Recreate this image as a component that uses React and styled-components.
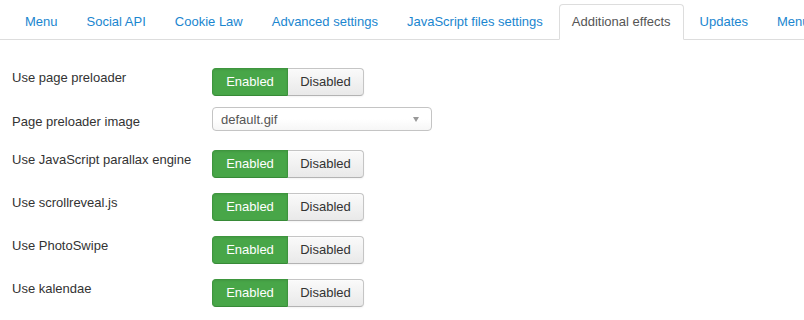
import React from 'react';
import styled, { createGlobalStyle } from 'styled-components';

const tabs = [
  'Menu',
  'Social API',
  'Cookie Law',
  'Advanced settings',
  'JavaScript files settings',
  'Additional effects',
  'Updates',
  'Menu assignment',
];

const options = [
  { label: 'Use page preloader', type: 'toggle' },
  { label: 'Page preloader image', type: 'select', value: 'default.gif' },
  { label: 'Use JavaScript parallax engine', type: 'toggle' },
  { label: 'Use scrollreveal.js', type: 'toggle' },
  { label: 'Use PhotoSwipe', type: 'toggle' },
  { label: 'Use kalendae', type: 'toggle' },
];

const GlobalStyle = createGlobalStyle`
  html, body {
    margin: 0;
    padding: 0;
    background: #fff;
  }
  body {
    font-family: "Liberation Sans", Arial, sans-serif;
    font-size: 13px;
    color: #333;
  }
`;

const Page = styled.div`
  width: 804px;
  height: 320px;
  padding-top: 4px;
  box-sizing: border-box;
  overflow: hidden;
`;

const TabBar = styled.ul`
  display: flex;
  margin: 0;
  padding: 0 0 0 12px;
  list-style: none;
  border-bottom: 1px solid #ddd;
  white-space: nowrap;
`;

const Tab = styled.li`
  flex-shrink: 0;
  margin: 0 3px -1px 0;
  padding: 8px 12px;
  line-height: 18px;
  border: 1px solid ${p => (p.$active ? '#ddd' : 'transparent')};
  border-bottom-color: ${p => (p.$active ? '#fff' : 'transparent')};
  border-radius: 4px 4px 0 0;
  background: ${p => (p.$active ? '#fff' : 'transparent')};
  color: ${p => (p.$active ? '#555' : '#1a86cf')};
  cursor: pointer;
`;

const Form = styled.div`
  margin-top: 28px;
  padding-left: 12px;
`;

const Row = styled.div`
  display: flex;
  align-items: flex-start;
  margin-bottom: 15px;
`;

const Label = styled.div`
  width: 200px;
  flex-shrink: 0;
  padding-top: ${p => p.$offset || 1}px;
  line-height: 18px;
  color: #333;
`;

const ButtonGroup = styled.div`
  display: flex;
`;

const ToggleButton = styled.button`
  width: 76px;
  height: 28px;
  box-sizing: border-box;
  padding: 0;
  font-family: inherit;
  font-size: 13px;
  line-height: 18px;
  border: 1px solid ${p => (p.$on ? '#3e963e' : '#c5c5c5')};
  border-bottom-color: ${p => (p.$on ? '#378a37' : '#b3b3b3')};
  background: ${p => (p.$on ? '#48a648' : 'linear-gradient(#fafafa, #e9e9e9)')};
  color: ${p => (p.$on ? '#fff' : '#333')};
  box-shadow: ${p => (p.$on ? 'inset 0 1px 2px rgba(0,0,0,0.08)' : 'inset 0 1px 0 rgba(255,255,255,0.4), 0 1px 2px rgba(0,0,0,0.05)')};
  cursor: pointer;

  &:first-child {
    border-radius: 4px 0 0 4px;
  }
  &:last-child {
    border-radius: 0 4px 4px 0;
    border-left: none;
  }
`;

const Select = styled.div`
  display: flex;
  align-items: center;
  justify-content: space-between;
  width: 220px;
  height: 24px;
  box-sizing: border-box;
  margin: -4px 0 4px;
  padding: 0 12px 0 8px;
  border: 1px solid #c4c4c4;
  border-radius: 4px;
  background: linear-gradient(#fff 50%, #f6f6f6);
  color: #555;
  font-size: 13px;
  cursor: pointer;
`;

const Caret = styled.span`
  width: 0;
  height: 0;
  border-left: 3px solid transparent;
  border-right: 3px solid transparent;
  border-top: 5px solid #999;
`;

const Toggle = () => (
  <ButtonGroup>
    <ToggleButton $on>Enabled</ToggleButton>
    <ToggleButton>Disabled</ToggleButton>
  </ButtonGroup>
);

const App = () => (
  <Page>
    <GlobalStyle />
    <TabBar>
      {tabs.map(t => (
        <Tab key={t} $active={t === 'Additional effects'}>{t}</Tab>
      ))}
    </TabBar>
    <Form>
      {options.map(o => (
        <Row key={o.label}>
          <Label $offset={o.type === 'select' ? 2 : 1}>{o.label}</Label>
          {o.type === 'toggle' ? (
            <Toggle />
          ) : (
            <Select>
              <span>{o.value}</span>
              <Caret />
            </Select>
          )}
        </Row>
      ))}
    </Form>
  </Page>
);

export default App;
